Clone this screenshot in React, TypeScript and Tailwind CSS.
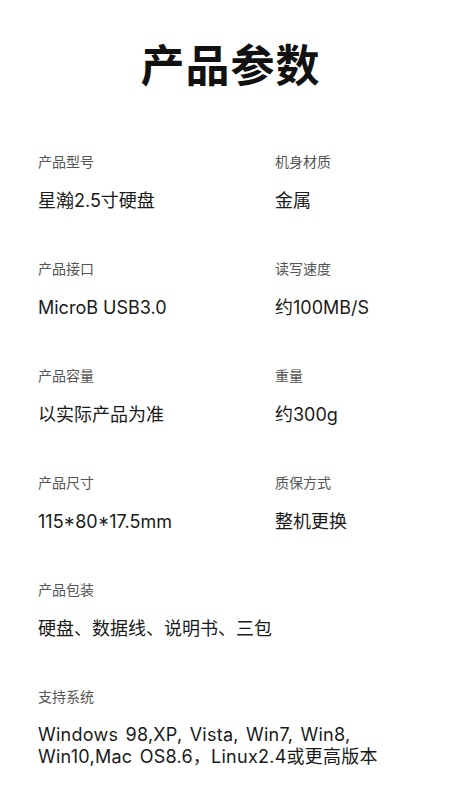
const SPECS: { label: string; value: string }[][] = [
  [
    { label: "产品型号", value: "星瀚2.5寸硬盘" },
    { label: "机身材质", value: "金属" },
  ],
  [
    { label: "产品接口", value: "MicroB USB3.0" },
    { label: "读写速度", value: "约100MB/S" },
  ],
  [
    { label: "产品容量", value: "以实际产品为准" },
    { label: "重量", value: "约300g" },
  ],
  [
    { label: "产品尺寸", value: "115*80*17.5mm" },
    { label: "质保方式", value: "整机更换" },
  ],
];

function Spec({ label, value }: { label: string; value: string }) {
  return (
    <div>
      <p className="text-[14px] leading-[20px] text-[#555]">{label}</p>
      <p className="mt-[17px] text-[18px] leading-[24px] text-[#1a1a1a]">{value}</p>
    </div>
  );
}

export default function App() {
  return (
    <div
      className="min-h-[806px] w-[461px] bg-white pt-[36px]"
      style={{ fontFamily: 'Inter, "Noto Sans CJK SC", sans-serif' }}
    >
      <h1
        className="text-center text-[44px] font-bold leading-[54px] tracking-[1px] text-[#111]"
        style={{ fontFamily: '"Noto Sans CJK SC", sans-serif' }}
      >
        产品参数
      </h1>

      <div className="mt-[62px] flex flex-col gap-[46px] px-[38px]">
        {SPECS.map((row, i) => (
          <div key={i} className="grid grid-cols-[237px_1fr]">
            {row.map((s) => (
              <Spec key={s.label} {...s} />
            ))}
          </div>
        ))}
        <Spec label="产品包装" value="硬盘、数据线、说明书、三包" />
        <div>
          <p className="text-[14px] leading-[20px] text-[#555]">支持系统</p>
          <p className="mt-[17px] text-[18px] leading-[22px] tracking-[0.25px] text-[#1a1a1a] [word-spacing:2px]">
            Windows 98,XP, Vista, Win7, Win8,
            <br />
            Win10,Mac OS8.6，Linux2.4或更高版本
          </p>
        </div>
      </div>
    </div>
  );
}
